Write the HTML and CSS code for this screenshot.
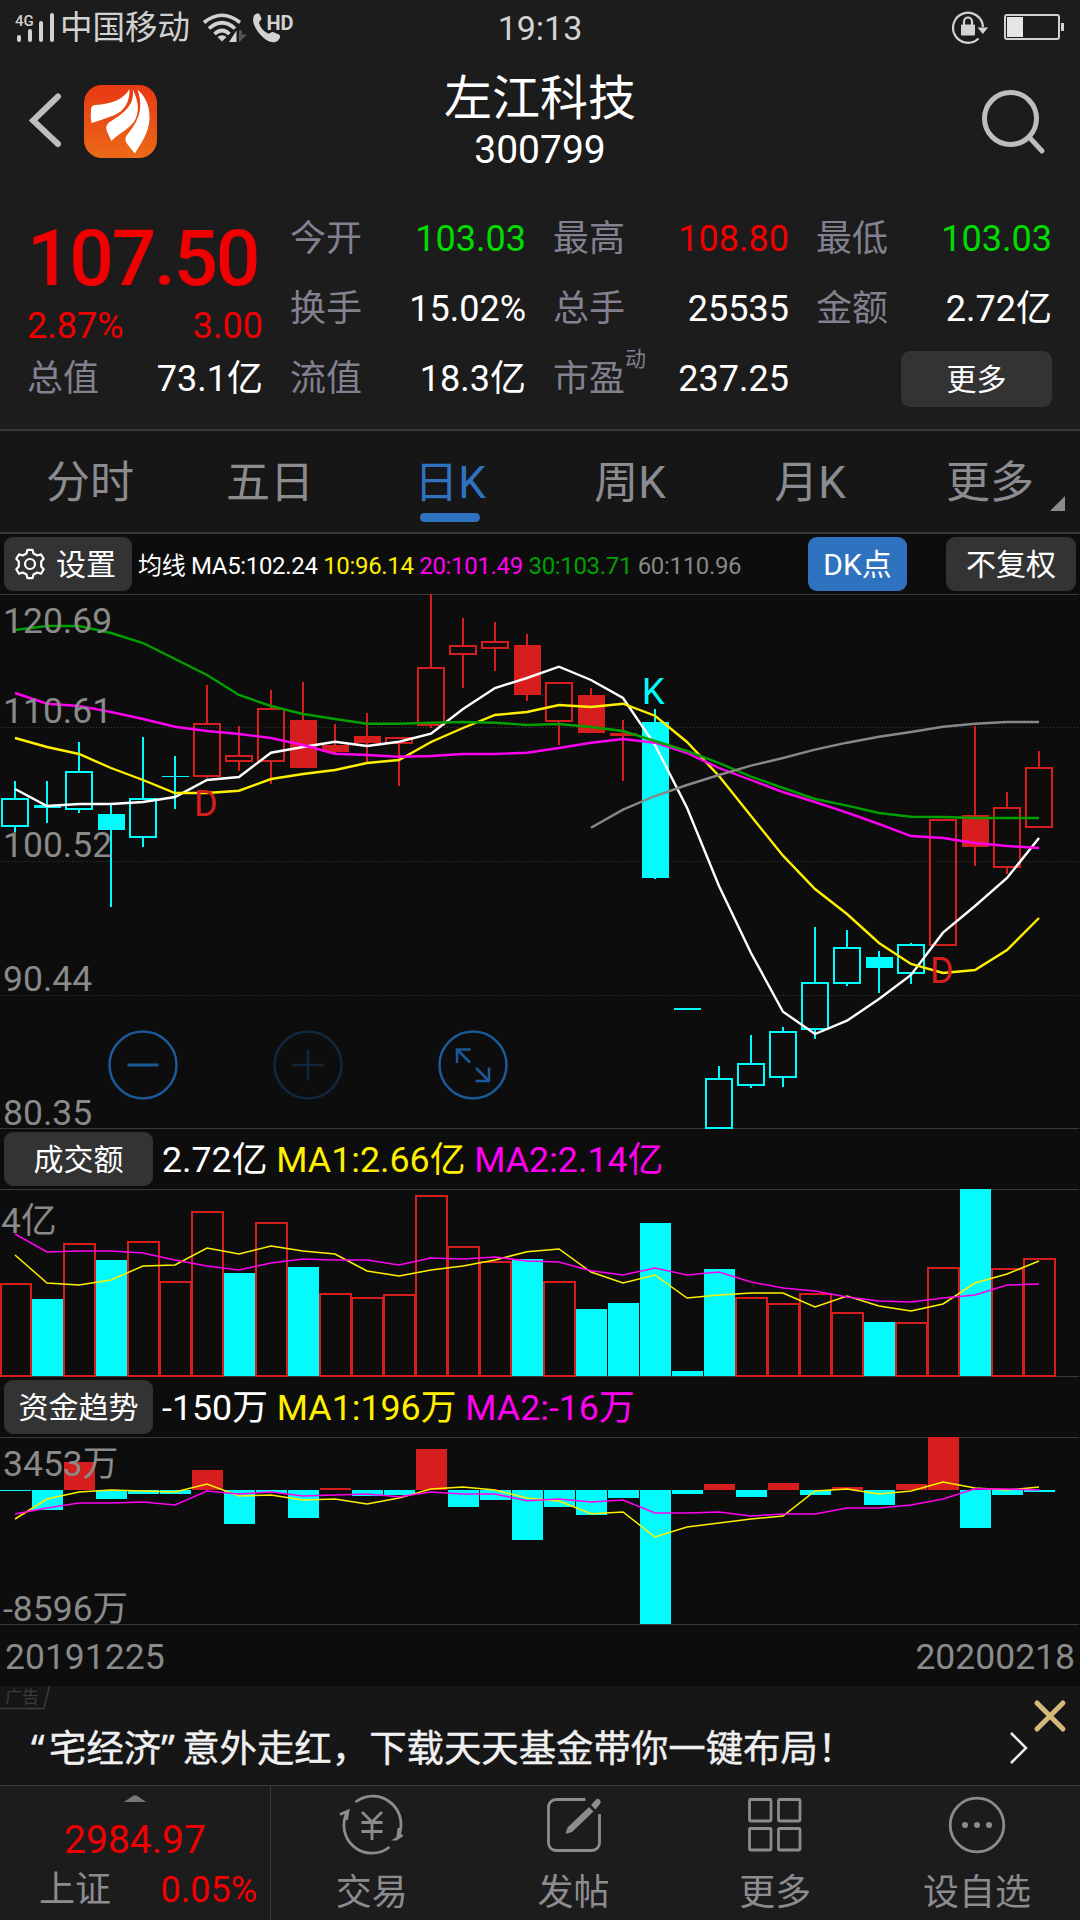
FILE: index.html
```html
<!DOCTYPE html>
<html lang="zh-CN">
<head>
  <meta charset="UTF-8">
  <meta name="viewport" content="width=device-width, initial-scale=1.0">
  <title>左江科技 300799</title>
  <link rel="stylesheet" href="styles.css">
</head>
<body>
<div class="status-bar">
  <div class="status-left">
    <svg class="signal" width="42" height="32" viewBox="0 0 42 32">
      <text x="0" y="15" class="signal-text">4G</text>
      <path d="M4 29v-3M15 29v-9M26 29v-17M37 29v-25" stroke="#d2d2d2" stroke-width="4" stroke-linecap="round"/>
    </svg>
    <span class="carrier">中国移动</span>
    <svg class="wifi" width="46" height="32" viewBox="0 0 46 32">
      <g fill="none" stroke="#d2d2d2" stroke-width="3.6">
        <path d="M2 11.5Q20 -3 38 11.5"/>
        <path d="M7 17.5Q20 6 33 17.5"/>
        <path d="M12.500 23Q20 16 27.500 23"/>
      </g>
      <path d="M15.500 26Q20 22.500 24.500 26L20 30.500z" fill="#d2d2d2"/>
      <path d="M27 31l7.500-11.500V31z" fill="#d2d2d2"/>
      <path d="M37 19.500h3v4h5L37 31.500z" fill="#555"/>
    </svg>
    <svg class="call" width="42" height="32" viewBox="0 0 42 32">
      <path d="M2 4.500C4 2.500 6 2 7.500 3l2 4.500c.5 1.500-2.500 3-2.500 4.500 1.500 5 5 8.500 9 10.500 1.500.5 3.500-2 5-1.500l6 2.500c2 1.500 1 4-1 6-3 3-8 2-13-1.500C6 22 -1.500 12 2 4.500z" fill="#d2d2d2"/>
      <text x="14.500" y="19" class="hd-text">HD</text>
    </svg>
  </div>
  <div class="clock">19:13</div>
  <div class="status-right">
    <svg width="38" height="34" viewBox="0 0 38 34">
      <path d="M26.500 28.500A15 15 0 1 1 31 17" fill="none" stroke="#d2d2d2" stroke-width="2.200"/>
      <path d="M25.500 17.500h10.500l-5.200 6.500z" fill="#d2d2d2"/>
      <rect x="9" y="14.500" width="14" height="11" rx="1" fill="#d2d2d2"/>
      <path d="M12 15v-3.500a4 4 0 0 1 8 0V15" fill="none" stroke="#d2d2d2" stroke-width="2.200"/>
    </svg>
    <svg width="61" height="28" viewBox="0 0 61 28">
      <rect x="1" y="2" width="54" height="24" rx="2" fill="none" stroke="#d2d2d2" stroke-width="2"/>
      <rect x="3" y="4" width="16" height="20" fill="#e6e6e6"/>
      <rect x="57" y="10" width="3" height="8" fill="#d2d2d2"/>
    </svg>
  </div>
</div>

<div class="header">
  <div class="header-left">
    <svg class="back" width="34" height="56" viewBox="0 0 34 56">
      <path d="M29 4.500L4 28.500L29 52" fill="none" stroke="#bebebe" stroke-width="6" stroke-linecap="round"/>
    </svg>
    <svg class="logo" width="73" height="73" viewBox="84 85 73 73">
      <defs>
        <linearGradient id="logoBg" x1="0" y1="0" x2="0" y2="1">
          <stop offset="0.1" stop-color="#e83c14"/>
          <stop offset="1" stop-color="#ec6a18"/>
        </linearGradient>
      </defs>
      <rect x="84" y="85" width="73" height="73" rx="18" fill="url(#logoBg)"/>
      <path d="M129.500 89C124 99 112 104 95 105Q91 105.500 91 110Q90.300 117 91.500 123Q101 120 113.500 115.500C125 111 130 101 129.500 89z" fill="#fff"/>
      <path d="M132.600 89C137 98 140 108 136 118C132 128 120 132 111.500 141Q108 134 106.500 130Q105.500 125 109 122.500C119 116 136 107 132.600 89z" fill="#fff"/>
      <path d="M137.500 89.500C146 97 150 107 149.500 119C149 133 141 143 135 153.500Q131 149 126.500 143Q124 139 127 135C136 124 145 111 137.500 89.500z" fill="#fff"/>
    </svg>
  </div>
  <div class="stock">
    <h1>左江科技</h1>
    <span>300799</span>
  </div>
  <svg class="search" width="66" height="68" viewBox="0 0 66 68">
    <circle cx="29.500" cy="29.500" r="26" fill="none" stroke="#bebebe" stroke-width="5"/>
    <path d="M48.500 48.500L61 62" stroke="#bebebe" stroke-width="5" stroke-linecap="round"/>
  </svg>
</div>

<div class="quote">
  <div class="quote-main">
    <div class="price">107.50</div>
    <div class="change"><span>2.87%</span><span>3.00</span></div>
    <div class="cell"><label>总值</label><b>73.1亿</b></div>
  </div>
  <div class="quote-grid">
    <div class="cell"><label>今开</label><b class="down">103.03</b></div>
    <div class="cell"><label>最高</label><b class="up">108.80</b></div>
    <div class="cell"><label>最低</label><b class="down">103.03</b></div>
    <div class="cell"><label>换手</label><b>15.02%</b></div>
    <div class="cell"><label>总手</label><b>25535</b></div>
    <div class="cell"><label>金额</label><b>2.72亿</b></div>
    <div class="cell"><label>流值</label><b>18.3亿</b></div>
    <div class="cell"><label>市盈<sup>动</sup></label><b>237.25</b></div>
    <div class="cell cell-more"><button class="button more-button">更多</button></div>
  </div>
</div>

<div class="tabs">
  <div class="tab">分时</div>
  <div class="tab">五日</div>
  <div class="tab active">日K</div>
  <div class="tab">周K</div>
  <div class="tab">月K</div>
  <div class="tab tab-more">更多</div>
</div>

<div class="toolbar">
  <button class="button settings">
    <svg width="32" height="32" viewBox="-16 -16 32 32">
      <path fill="none" stroke="#fff" stroke-width="2.200" stroke-linejoin="round" d="M-3.500 -10.500L-2.500 -14.200H2.500L3.500 -10.500L7.300 -8.500L11 -9.700L13.700 -5.200L11.200 -2.400V2.400L13.700 5.200L11 9.700L7.300 8.500L3.500 10.500L2.500 14.200H-2.500L-3.500 10.500L-7.300 8.500L-11 9.700L-13.700 5.200L-11.200 2.400V-2.400L-13.700 -5.200L-11 -9.700L-7.300 -8.500z"/>
      <circle r="5" fill="none" stroke="#fff" stroke-width="2.200"/>
    </svg>
    设置
  </button>
  <div class="ma-legend">
    均线
    <span>MA5:102.24</span>
    <span class="ma10">10:96.14</span>
    <span class="ma20">20:101.49</span>
    <span class="ma30">30:103.71</span>
    <span class="ma60">60:110.96</span>
  </div>
  <button class="button dk">DK点</button>
  <button class="button adjust">不复权</button>
</div>

<div class="chart-wrap">
  <svg id="kline" class="chart" width="1080" height="535" viewBox="0 594 1080 535"></svg>
  <div class="zoom-tools">
    <svg width="70" height="70" viewBox="-35 -35 70 70">
      <circle r="33.500"/><path d="M-15.500 0h31" class="thick"/>
    </svg>
    <svg class="disabled" width="70" height="70" viewBox="-35 -35 70 70">
      <circle r="33.500"/><path d="M-15.500 0h31M0 -15.500v31"/>
    </svg>
    <svg width="70" height="70" viewBox="-35 -35 70 70">
      <circle r="33.500"/><path d="M-3 -2.500L-15.500 -15M-16 -2V-15.500H-2.500M3 3L15.500 15.500M16 2.500V16H2.500"/>
    </svg>
  </div>
</div>

<div class="indicator">
  <button class="button">成交额</button>
  <div class="values"><span>2.72亿</span> <span class="ma10">MA1:2.66亿</span> <span class="ma20">MA2:2.14亿</span></div>
</div>
<svg id="volume" class="chart" width="1080" height="188" viewBox="0 1189 1080 188"></svg>

<div class="indicator">
  <button class="button">资金趋势</button>
  <div class="values"><span>-150万</span> <span class="ma10">MA1:196万</span> <span class="ma20">MA2:-16万</span></div>
</div>
<svg id="flow" class="chart" width="1080" height="188" viewBox="0 1437 1080 188"></svg>

<div class="dates"><span>20191225</span><span>20200218</span></div>

<div class="ad">
  <span class="ad-tag">广告</span>
  <svg class="ad-corner" width="54" height="24" viewBox="0 0 54 24"><path d="M0 22.500H44L49.500 0" fill="none" stroke="#3c3c3c" stroke-width="1.500"/></svg>
  <p><span class="quote-open">“</span>宅经济<span class="quote-close">”</span>意外走红，下载天天基金带你一键布局！</p>
  <svg class="ad-arrow" width="22" height="36" viewBox="0 0 22 36"><path d="M3 3L18 18L3 33" fill="none" stroke="#eee" stroke-width="2.500"/></svg>
  <svg class="ad-close" width="34" height="34" viewBox="0 0 34 34"><path d="M4 4L30 30M30 4L4 30" stroke="#d5b87a" stroke-width="5" stroke-linecap="round"/></svg>
</div>

<div class="footer">
  <div class="index">
    <svg width="22" height="7" viewBox="0 0 22 7"><path d="M0 7L9 .8Q11 -.5 13 .8L22 7z" fill="#77777b"/></svg>
    <div class="index-value">2984.97</div>
    <div class="index-row"><label>上证</label><span>0.05%</span></div>
  </div>
  <div class="nav">
    <svg width="68" height="64" viewBox="-34 -32 68 64">
      <path d="M-16.500 -23A28.300 28.300 0 0 1 25 14M25 14L24 14L30.500 10M25.500 14L27 3M17.500 22A28 28 0 0 1 -24.500 -13.500M-32 -10.500L-24 -14L-25.500 -5"/>
      <path d="M-10 -13L0 -3L10 -13M-10.500 -2.500H10.500M-10.500 6.500H10.500M0 -3V15"/>
    </svg>
    <span>交易</span>
  </div>
  <div class="nav">
    <svg width="68" height="64" viewBox="-34 -32 68 64">
      <path d="M11.500 -25.500H-18A7.500 7.500 0 0 0 -25.500 -18V18A7.500 7.500 0 0 0 -18 25.500H18A7.500 7.500 0 0 0 25.500 18V-11"/>
      <path class="solid" d="M15 -18L19.500 -13.500L-2 7L-8.500 9L-6.500 2.500zM17 -20L22 -25.500Q24 -27 26 -25Q27.500 -23 26 -21L21.500 -15.500z"/>
    </svg>
    <span>发帖</span>
  </div>
  <div class="nav">
    <svg width="68" height="64" viewBox="-34 -32 68 64">
      <rect x="-25.500" y="-25.500" width="21.500" height="21.500" rx="1"/>
      <rect x="3.500" y="-25.500" width="21.500" height="21.500" rx="1"/>
      <rect x="-25.500" y="3.500" width="21.500" height="21.500" rx="1"/>
      <rect x="3.500" y="3.500" width="21.500" height="21.500" rx="1"/>
    </svg>
    <span>更多</span>
  </div>
  <div class="nav">
    <svg width="68" height="64" viewBox="-34 -32 68 64">
      <circle r="26.800"/>
      <circle class="solid" cx="-12" r="3"/><circle class="solid" r="3"/><circle class="solid" cx="12" r="3"/>
    </svg>
    <span>设自选</span>
  </div>
</div>

<script src="script.js"></script>
</body>
</html>
```
FILE: styles.css
```css
* {
  box-sizing: border-box;
}

body {
  margin: 0;
  width: 1080px;
  height: 1920px;
  overflow: hidden;
  background-color: #1c1c1c;
  color: #fff;
  font-family: Roboto, "Noto Sans CJK SC", sans-serif;
}

svg {
  display: block;
  flex-shrink: 0;
}

.status-bar {
  height: 56px;
  padding: 0 15px;
  display: grid;
  grid-template-columns: 1fr auto 1fr;
  color: #d2d2d2;
}

.status-left {
  display: flex;
  align-items: flex-start;
  padding-top: 11px;
}

.signal-text {
  font-size: 15px;
  font-weight: 500;
  fill: #d2d2d2;
}

.hd-text {
  font-size: 20px;
  font-weight: 700;
  fill: #d2d2d2;
  stroke: #1c1c1c;
  stroke-width: 2px;
  paint-order: stroke;
}

.carrier {
  font-size: 32.500px;
  line-height: 32px;
  margin: 1px 0 0 3px;
}

.wifi {
  margin-left: 12px;
}

.call {
  margin-left: 4px;
}

.clock {
  font-size: 34px;
  line-height: 56px;
}

.status-right {
  display: flex;
  justify-content: flex-end;
  align-items: flex-start;
  padding-top: 10px;
  gap: 14px;
}

.status-right svg:last-child {
  margin-top: 3px;
}

.header {
  height: 148px;
  padding: 0 33px 0 29px;
  display: grid;
  grid-template-columns: 1fr auto 1fr;
}

.header-left {
  display: flex;
  align-items: center;
  height: 131px;
  gap: 21px;
}

.back {
  margin-top: -3px;
}

.stock {
  text-align: center;
  padding-top: 15px;
  margin-right: -4px;
}

.stock h1 {
  margin: 0;
  font-size: 48px;
  font-weight: 400;
  line-height: 55px;
}

.stock span {
  display: block;
  font-size: 39px;
  line-height: 49px;
}

.search {
  justify-self: end;
  margin-top: 33px;
}

.quote {
  height: 225px;
  padding: 0 28px 0 27px;
  display: grid;
  grid-template-columns: 236px 1fr;
  column-gap: 27px;
}

.price {
  margin-top: 4px;
  font-size: 78.500px;
  font-weight: 500;
  line-height: 100px;
  letter-spacing: -2.300px;
  color: #f00000;
}

.change {
  display: flex;
  justify-content: space-between;
  font-size: 36px;
  line-height: 36px;
  color: #f00000;
}

.quote-grid {
  display: grid;
  grid-template-columns: repeat(3, 1fr);
  grid-auto-rows: 70px;
  column-gap: 27px;
}

.cell {
  display: flex;
  justify-content: space-between;
  font-size: 36px;
  line-height: 70px;
}

.cell label {
  color: #83808f;
}

.cell sup {
  font-size: 21px;
  line-height: 1px;
  vertical-align: 25px;
}

.cell b {
  font-weight: 400;
}

.cell .up {
  color: #f00000;
}

.cell .down {
  color: #00dc00;
}

.button {
  border: 0;
  border-radius: 9px;
  background-color: #333;
  color: #fff;
  font-family: inherit;
  font-size: 30px;
  line-height: 53px;
  height: 54px;
  padding: 0;
}

.cell-more {
  justify-content: flex-end;
}

.more-button {
  width: 151px;
  height: 56px;
  margin-top: 7px;
}

.tabs {
  height: 105px;
  display: flex;
  background-color: #161616;
  border-top: 2px solid #393939;
  border-bottom: 2px solid #393939;
}

.tab {
  position: relative;
  flex: 1;
  text-align: center;
  font-size: 44px;
  line-height: 104px;
  color: #8c8c90;
}

.tab.active {
  color: #2f73c0;
}

.tab.active::after {
  content: "";
  position: absolute;
  left: 60px;
  bottom: 10px;
  width: 60px;
  height: 9px;
  border-radius: 5px;
  background-color: #2f73c0;
}

.tab-more::after {
  content: "";
  position: absolute;
  right: 15px;
  bottom: 21px;
  border-left: 15px solid transparent;
  border-bottom: 15px solid #8c8c90;
}

.toolbar {
  height: 60px;
  padding: 3px 4px;
  display: flex;
  background-color: #0d0d0d;
}

.settings {
  width: 128px;
  display: flex;
  align-items: center;
  gap: 10px;
  padding-left: 10px;
}

.ma-legend {
  margin-left: 6px;
  font-size: 24px;
  line-height: 58px;
  letter-spacing: -0.330px;
  white-space: nowrap;
}

.ma10 {
  color: #fff000;
}

.ma20 {
  color: #ff00f0;
}

.ma30 {
  color: #00a000;
}

.ma60 {
  color: #888;
}

.dk {
  width: 99px;
  margin-left: auto;
  background-color: #2f73c0;
}

.adjust {
  width: 130px;
  margin-left: 39px;
}

.chart-wrap {
  position: relative;
}

.chart {
  background-color: #0d0d0d;
  overflow: visible;
}

.chart .frame {
  stroke: #393939;
  stroke-width: 1;
}

.chart .grid {
  stroke: #393939;
  stroke-width: 1;
  stroke-dasharray: 1 2;
}

.chart .label {
  font-size: 35.500px;
  fill: #8a8a8a;
}

.chart .mark {
  font-size: 36px;
}

.chart polyline {
  fill: none;
}

/* zoom controls sit on top of the k-line chart */
.zoom-tools {
  position: absolute;
  left: 107.500px;
  top: 435.500px;
  display: flex;
  gap: 95px;
}

.zoom-tools svg {
  fill: none;
  stroke: #1b5a98;
  stroke-width: 2.500;
}

.zoom-tools .thick {
  stroke-width: 3;
}

.zoom-tools .disabled {
  stroke: #12283e;
}

.indicator {
  height: 60px;
  padding: 3px 4px;
  display: flex;
  background-color: #0d0d0d;
}

.indicator .button {
  width: 149px;
}

.values {
  margin-left: 9px;
  font-size: 35.750px;
  line-height: 56px;
}

.dates {
  height: 61px;
  padding: 4px 5px 0;
  display: flex;
  justify-content: space-between;
  background-color: #0d0d0d;
  font-size: 35.500px;
  line-height: 57px;
  color: #8a8a8a;
}

.ad {
  position: relative;
  height: 99px;
  display: flex;
  align-items: center;
  justify-content: space-between;
  padding: 25px 51px 0 31px;
  background-color: #161616;
}

.ad p {
  margin: 0;
  font-size: 37.400px;
  line-height: 50px;
  color: #f0f0f0;
  -webkit-text-stroke: 0.400px #f0f0f0;
}

.quote-open,
.quote-close {
  display: inline-block;
  width: 18px;
  font-family: "Noto Sans", sans-serif;
}

.quote-close {
  width: 21px;
}

.ad-arrow {
  margin-right: -1px;
}

.ad-tag {
  position: absolute;
  left: 5px;
  top: 2px;
  font-size: 17px;
  line-height: 18px;
  color: #3c3c3c;
}

.ad-corner {
  position: absolute;
  left: 0;
  top: 0;
}

.ad-close {
  position: absolute;
  right: 13px;
  top: 13px;
}

.footer {
  height: 135px;
  padding-right: 2px;
  display: flex;
  border-top: 1px solid #393939;
}

.index {
  width: 271px;
  border-right: 1px solid #393939;
  padding-top: 9px;
  color: #f00000;
}

.index svg {
  margin: 0 auto;
}

.index-value {
  padding-top: 2px;
  font-size: 39px;
  line-height: 73px;
  text-align: center;
}

.index-row {
  display: flex;
  justify-content: space-between;
  padding: 0 13px 0 39px;
  font-size: 36px;
  line-height: 26px;
}

.index-row label {
  color: #8c8c90;
}

.nav {
  flex: 1;
  display: flex;
  flex-direction: column;
  align-items: center;
  padding-top: 7px;
  font-size: 36px;
  line-height: 72px;
  color: #8c8c90;
}

.nav svg {
  fill: none;
  stroke: #8c8c90;
  stroke-width: 2.800;
}

.nav .solid {
  fill: #8c8c90;
  stroke: none;
}
```
FILE: script.js
```js
const RED = '#d71e1e';
const CYAN = '#00fcfc';
const YELLOW = '#fff000';
const MAGENTA = '#ff00f0';
const STEP = 32;

// [color, filled, high, top, bottom, low]
const candles = [
  ['c', 0, 781, 799, 826, 832], ['c', 1, 781, 805, 808, 823], ['c', 0, 742, 772, 809, 813],
  ['c', 1, 803, 814, 830, 907], ['c', 0, 737, 799, 837, 847], ['c', 1, 756, 776, 777, 809],
  ['r', 0, 685, 724, 776, 778], ['r', 0, 726, 756, 761, 771], ['r', 0, 690, 709, 761, 784],
  ['r', 1, 682, 720, 768, 768], ['r', 1, 724, 745, 752, 753], ['r', 1, 713, 736, 743, 762],
  ['r', 0, 738, 738, 743, 786], ['r', 0, 594, 668, 725, 728], ['r', 0, 618, 646, 654, 688],
  ['r', 0, 622, 642, 648, 671], ['r', 1, 634, 645, 695, 701], ['r', 0, 683, 683, 721, 745],
  ['r', 1, 688, 695, 733, 733], ['r', 1, 720, 733, 736, 781], ['c', 1, 709, 722, 878, 879],
  ['c', 1, 1008, 1008, 1010, 1010], ['c', 0, 1066, 1079, 1128, 1128], ['c', 0, 1035, 1064, 1085, 1088],
  ['c', 0, 1027, 1032, 1077, 1087], ['c', 0, 927, 983, 1029, 1039], ['c', 0, 930, 948, 983, 986],
  ['c', 1, 951, 957, 968, 993], ['c', 0, 943, 945, 973, 984], ['r', 0, 820, 820, 945, 945],
  ['r', 1, 726, 815, 847, 866], ['r', 0, 792, 808, 867, 874], ['r', 0, 751, 768, 827, 827]
];

const ma5 = [789, 806, 804, 804, 802, 797, 780, 777, 752.7, 747, 741.7, 746, 741.7, 733.7, 709, 688, 678, 666.7, 680, 698, 745, 807.7, 886, 953, 1011.7, 1034, 1020.7, 999, 975, 932.7, 906, 878, 838];
const ma10 = [738, 747, 754, 768, 780, 793, 793, 790.7, 779, 774, 770, 763, 760, 742, 728, 715, 712, 705, 707, 703.7, 715.7, 742, 776, 816, 855.7, 889, 914, 943, 964, 973, 970, 950, 918];
const ma20 = [693, 703.7, 706, 712, 719, 726.7, 731, 734, 738, 745, 753.7, 755, 756.7, 756, 754, 754, 752.7, 748, 742.7, 739, 742.7, 753, 768, 780, 792, 802, 812.7, 824, 836, 838, 843, 846, 848];
const ma30 = [630, 626, 626, 633, 643, 659, 675, 695, 706, 714, 719, 723.7, 723.7, 722.7, 722, 722.7, 725, 724, 727, 731, 741, 751, 763, 776.7, 788, 799, 805.7, 813, 816.7, 817, 818, 818, 818];
const ma60 = [827.7, 809.7, 796, 785, 775, 765.7, 758, 749.7, 742.7, 736.7, 732, 726.7, 723.7, 722, 722];

// positive = hollow red bar, negative = solid cyan bar
const volumes = [1283, -1299, 1243, -1260, 1241, 1281, 1211, -1273, 1222, -1267, 1293, 1297, 1294, 1195, 1246, 1261, -1259, 1281, -1309, -1303, -1223, -1371, -1269, 1297, 1303, 1293, 1312, -1322, 1322, 1267, -1189, 1268, 1258];
const volMa1 = [1255, 1283, 1285, 1280, 1266, 1265, 1248, 1254, 1246, 1251, 1254, 1271, 1276, 1270, 1266, 1260, 1251.7, 1249, 1272, 1283, 1275, 1298, 1295, 1293, 1293, 1307, 1296, 1306, 1311, 1304, 1283, 1274, 1261];
const volMa2 = [1234, 1252, 1251, 1251, 1253, 1260, 1266, 1270, 1263, 1259, 1260, 1260, 1265, 1258, 1259, 1257, 1261, 1262, 1270.7, 1275, 1268, 1275, 1272, 1282, 1288, 1291, 1297, 1301, 1302, 1298, 1295, 1285, 1284];

const ZERO = 1490;
const flows = [1491, 1510, 1462, 1499, 1494, 1494, 1470, 1524, 1493, 1518, 1488, 1496, 1495, 1449, 1507, 1500, 1540, 1507, 1515, 1498, 1624, 1494, 1484, 1497, 1483, 1495, 1487, 1505, 1484, 1437, 1528, 1495, 1492];
const flowMa1 = [1519, 1499, 1492, 1490, 1491, 1492, 1484, 1496, 1495, 1500, 1499, 1504, 1498, 1489, 1487, 1490, 1498, 1501, 1513.7, 1512, 1537, 1527, 1523, 1519, 1516, 1491, 1489, 1494, 1491, 1482, 1488, 1490, 1487];
const flowMa2 = [1514, 1508, 1503, 1503, 1502, 1505, 1491, 1494, 1492, 1496, 1495, 1494, 1496.7, 1492, 1494, 1494, 1500.7, 1499, 1502, 1500, 1513, 1513, 1512, 1516, 1514, 1514, 1508, 1508, 1505, 1499, 1488.7, 1489, 1490];

function hline(y, cls) {
  return `<line class="${cls}" x1="0" x2="1079" y1="${y}" y2="${y}"/>`;
}

function label(x, y, text) {
  return `<text class="label" x="${x}" y="${y}">${text}</text>`;
}

function mark(x, y, text, color) {
  return `<text class="mark" x="${x}" y="${y}" fill="${color}">${text}</text>`;
}

function line(values, color, width, start = 0) {
  const points = values.map((y, i) => `${(i + start) * STEP + 15},${y}`).join(' ');
  return `<polyline points="${points}" stroke="${color}" stroke-width="${width}"/>`;
}

function box(x, y, w, h, color, filled) {
  return filled
    ? `<rect x="${x}" y="${y}" width="${w}" height="${h}" fill="${color}"/>`
    : `<rect x="${x}" y="${y}" width="${w}" height="${h}" fill="none" stroke="${color}" stroke-width="2"/>`;
}

function drawKline() {
  let out = hline(594.5, 'frame') + hline(727.5, 'grid') + hline(861.5, 'grid') + hline(995.5, 'grid') + hline(1128.5, 'frame');
  candles.forEach(([c, filled, high, top, bottom, low], i) => {
    const x = i * STEP + 15;
    const color = c === 'r' ? RED : CYAN;
    out += `<path d="M${x} ${high}V${top}M${x} ${bottom}V${low}" stroke="${color}" stroke-width="2"/>`;
    out += filled ? box(x - 13, top, 27, bottom - top, color, true) : box(x - 13, top, 26, bottom - top, color, false);
  });
  out += line(ma5, '#fff', 2.4) + line(ma10, YELLOW, 2.4) + line(ma20, MAGENTA, 2.4) + line(ma30, '#00a000', 2.4) + line(ma60, '#888', 2.4, 18);
  out += mark(194, 816, 'D', RED) + mark(930, 983, 'D', RED) + mark(642, 704, 'K', CYAN);
  out += label(3, 633, '120.69') + label(3, 722.5, '110.61') + label(3, 857, '100.52') + label(3, 991, '90.44') + label(3, 1125, '80.35');
  document.getElementById('kline').innerHTML = out;
}

function drawVolume() {
  let out = hline(1189.5, 'frame') + hline(1376.5, 'frame');
  volumes.forEach((v, i) => {
    const x = i * STEP;
    const top = Math.abs(v);
    out += v < 0 ? box(x, top, 31, 1376 - top, CYAN, true) : box(i ? x : 1, top + 1, i ? 31 : 30, 1375 - top, RED, false);
  });
  out += line(volMa1, YELLOW, 1.5) + line(volMa2, MAGENTA, 1.5) + label(1, 1233, '4亿');
  document.getElementById('volume').innerHTML = out;
}

function drawFlow() {
  let out = hline(1437.5, 'frame') + hline(1624.5, 'frame');
  flows.forEach((v, i) => {
    const up = v < ZERO;
    out += box(i * STEP, Math.min(v, ZERO), 31, Math.abs(v - ZERO), up ? RED : CYAN, true);
  });
  out += line(flowMa1, YELLOW, 1.5) + line(flowMa2, MAGENTA, 1.5) + label(3, 1476, '3453万') + label(3, 1620.5, '-8596万');
  document.getElementById('flow').innerHTML = out;
}

drawKline();
drawVolume();
drawFlow();
```
